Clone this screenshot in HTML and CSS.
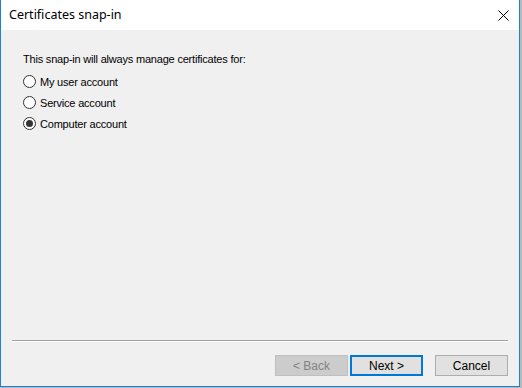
FILE: index.html
```html
<!DOCTYPE html>
<html lang="en">
<head>
  <meta charset="UTF-8" />
  <title>Certificates snap-in</title>
  <link rel="stylesheet" href="styles.css">
</head>
<body>
  <div class="dialog">
    <div class="titlebar">
      <span class="title">Certificates snap-in</span>
      <svg class="close" width="11" height="11" viewBox="0 0 11 11">
        <path d="M0.5 0.5 L10.5 10.5 M10.5 0.5 L0.5 10.5" stroke="#000" stroke-width="1" fill="none"/>
      </svg>
    </div>

    <div class="content">
      <p class="label">This snap-in will always manage certificates for:</p>
      <label class="option"><span class="radio"></span>My user account</label>
      <label class="option"><span class="radio"></span>Service account</label>
      <label class="option"><span class="radio checked"></span>Computer account</label>
    </div>

    <div class="footer">
      <div class="separator"></div>
      <div class="buttons">
        <button class="btn disabled">&lt; Back</button>
        <button class="btn default">Next &gt;</button>
        <button class="btn cancel">Cancel</button>
      </div>
    </div>
  </div>
</body>
</html>
```

FILE: styles.css
```css
* {
  margin: 0;
  padding: 0;
  box-sizing: border-box;
}

body {
  width: 522px;
  height: 388px;
  background: #b9b9b9;
  font-family: 'Liberation Sans', Arial, sans-serif;
  font-size: 11px;
  letter-spacing: -0.2px;
  color: #000;
  overflow: hidden;
}

.dialog {
  width: 520px;
  height: 387px;
  background: #f0f0f0;
  border: 1px solid #1883d7;
  border-top: none;
  display: flex;
  flex-direction: column;
}

.titlebar {
  height: 30px;
  background: #fff;
  display: flex;
  align-items: center;
  justify-content: space-between;
  padding: 0 10px 0 8px;
}

.title {
  font-family: 'Noto Sans', sans-serif;
  font-size: 12.5px;
  letter-spacing: 0;
  color: #000;
  padding-bottom: 1px;
}

.close {
  display: block;
}

.content {
  flex: 1;
  padding: 22px 0 0 22px;
  display: flex;
  flex-direction: column;
}

.label {
  height: 14px;
  line-height: 14px;
  margin-bottom: 5px;
}

.option {
  display: flex;
  align-items: center;
  gap: 4px;
  height: 21px;
}

.radio {
  width: 13px;
  height: 13px;
  border: 1px solid #333;
  border-radius: 50%;
  background: #fff;
  display: flex;
  align-items: center;
  justify-content: center;
}

.radio.checked::after {
  content: "";
  width: 7px;
  height: 7px;
  border-radius: 50%;
  background: #333;
}

.footer {
  padding: 0 11px 10px 11px;
}

.separator {
  height: 2px;
  border-top: 1px solid #a0a0a0;
  border-bottom: 1px solid #fff;
  margin-bottom: 13px;
}

.buttons {
  display: flex;
  justify-content: flex-end;
  gap: 2px;
}

.btn {
  width: 73px;
  height: 21px;
  font-family: 'Liberation Sans', Arial, sans-serif;
  font-size: 12px;
  background: #e1e1e1;
  border: 1px solid #adadad;
  color: #000;
}

.btn.disabled {
  background: #cccccc;
  border-color: #bfbfbf;
  color: #838383;
}

.btn.default {
  border: 2px solid #0078d7;
}

.btn.cancel {
  margin-left: 10px;
}
```
